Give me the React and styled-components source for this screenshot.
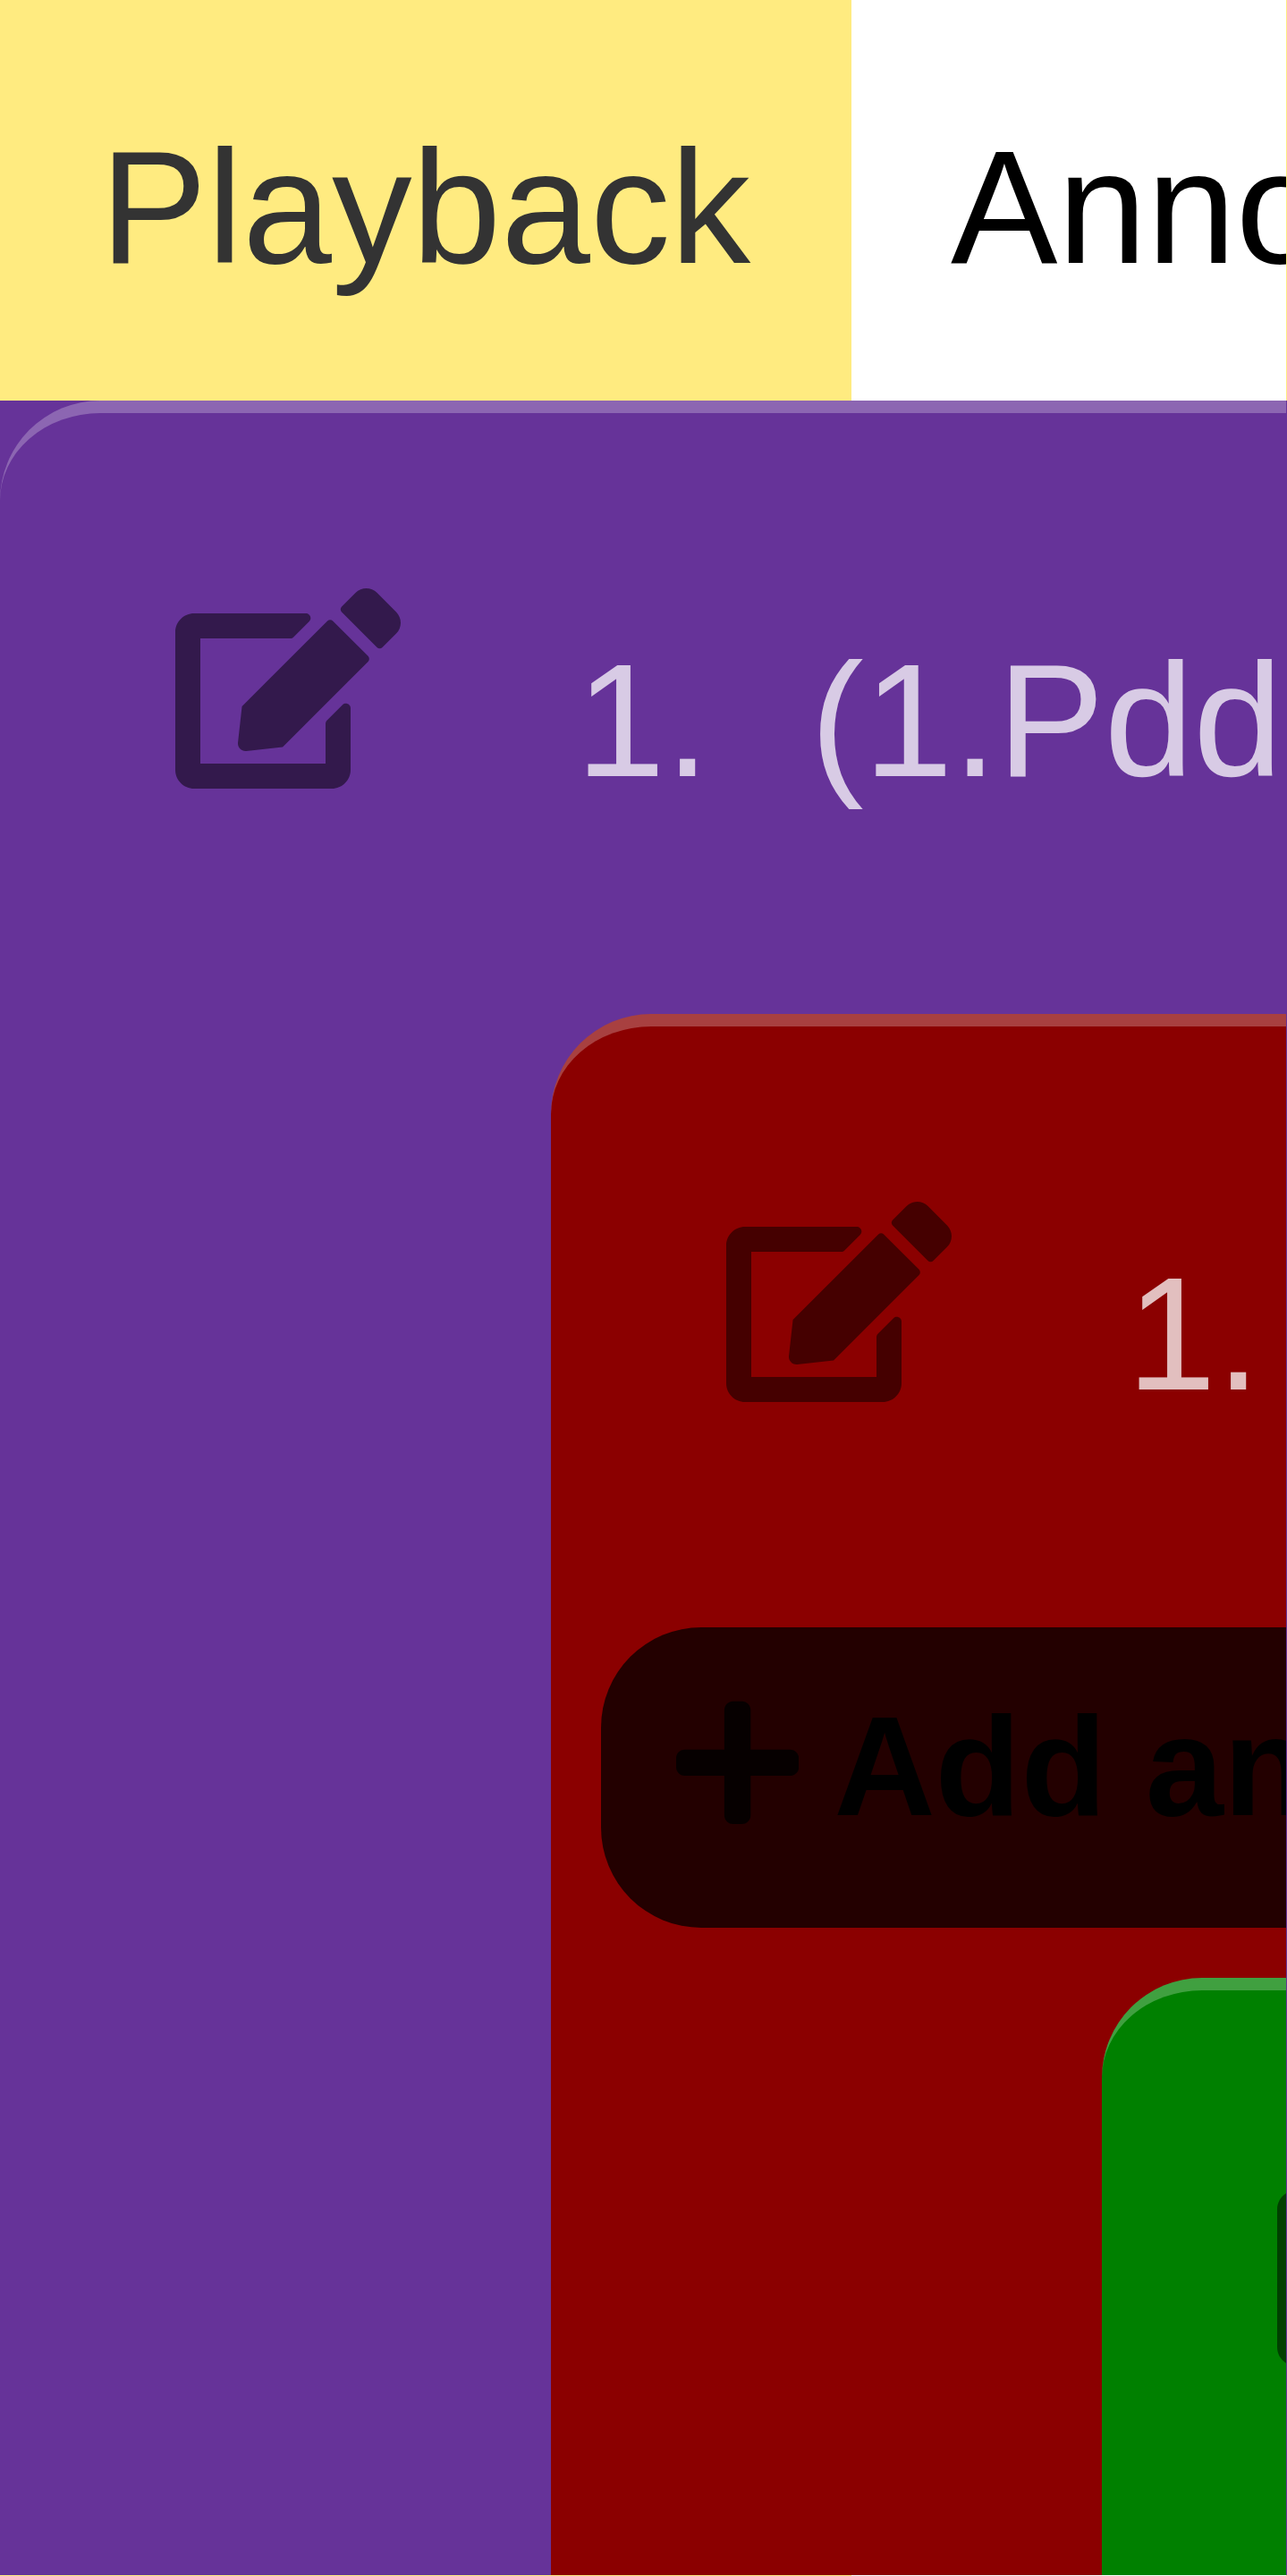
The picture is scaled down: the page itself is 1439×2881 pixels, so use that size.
import React from 'react';
import styled, { createGlobalStyle } from 'styled-components';
import { FaEdit, FaPlus } from 'react-icons/fa';

const GlobalStyle = createGlobalStyle`
  *, *::before, *::after { box-sizing: border-box; }
  html { overflow: hidden; }
  body {
    margin: 0;
    font-family: "Liberation Sans", Arial, sans-serif;
    font-size: 179.2px;
    background: #fff;
  }
`;

const Frame = styled.div`
  display: grid;
  grid-template-columns: 1438px 1px;
  grid-template-rows: 2880px 1px;
`;

const Screen = styled.div`
  display: flex;
  flex-direction: column;
  min-width: 0;
  overflow: hidden;
`;

const RightEdge = styled.div`
  background: linear-gradient(to bottom, #ffeb80 448px, #663399 448px);
`;

const BottomEdge = styled.div`
  background: linear-gradient(to right, #ffeb80 952px, #fff 952px);
`;

const Tabs = styled.nav`
  display: flex;
  flex: 0 0 448px;
`;

const Tab = styled.button`
  flex: none;
  min-width: 952px;
  height: 448px;
  margin: 0;
  padding: 16px 112px 0 ${(p) => (p.$active ? '112px' : '111px')};
  border: 0;
  font: inherit;
  line-height: 432px;
  text-align: left;
  white-space: nowrap;
  color: ${(p) => (p.$active ? '#333' : '#000')};
  background: ${(p) => (p.$active ? '#ffeb80' : '#fff')};
`;

const Tree = styled.main`
  flex: 1 0 auto;
  background: #663399;
`;

const Panel = styled.section`
  min-height: 2433px;
  margin-left: ${(p) => (p.$nested ? '616px' : '0')};
  border-top: 14px solid rgba(255, 255, 255, 0.25);
  border-top-left-radius: 112px;
  background: ${(p) => p.$color};
`;

const Header = styled.header`
  display: flex;
  align-items: flex-start;
  height: 672px;
  padding-left: 196px;
  white-space: nowrap;
`;

const EditIcon = styled(FaEdit)`
  flex: none;
  width: 252px;
  height: 224px;
  margin: 196px 196px 0 0;
  color: rgba(0, 0, 0, 0.5);
`;

const Title = styled.span`
  display: flex;
  gap: 112.6px;
  line-height: 672px;
  padding-top: 8px;
  color: rgba(255, 255, 255, 0.75);
`;

const AddButton = styled.button`
  display: flex;
  align-items: center;
  gap: 39.2px;
  width: 1680px;
  height: 336px;
  margin: 0 0 56px 56px;
  padding: 0 84px;
  border: 0;
  border-radius: 112px;
  font: bold 156.8px "Liberation Sans", Arial, sans-serif;
  white-space: nowrap;
  color: #000;
  background: rgba(0, 0, 0, 0.75);
`;

const PlusIcon = styled(FaPlus)`
  flex: none;
  width: 137.2px;
  height: 156.8px;
  margin-bottom: 33px;
  opacity: 0.8;
`;

const AddLabel = styled.span`
  padding-bottom: 24px;
`;

function Node({ color, nested, number, label, children }) {
  return (
    <Panel $color={color} $nested={nested}>
      <Header>
        <EditIcon />
        <Title>
          <span>{number}</span>
          {label && <span>{label}</span>}
        </Title>
      </Header>
      {children}
    </Panel>
  );
}

export default function App() {
  return (
    <Frame>
      <GlobalStyle />
      <Screen>
        <Tabs>
          <Tab $active>Playback</Tab>
          <Tab>Annotate</Tab>
        </Tabs>
        <Tree>
          <Node color="#663399" number="1." label="(1.Pdd4)">
            <Node color="#8b0000" nested number="1.">
              <AddButton>
                <PlusIcon />
                <AddLabel>Add annotation</AddLabel>
              </AddButton>
              <Node color="#008000" nested />
            </Node>
          </Node>
        </Tree>
      </Screen>
      <RightEdge />
      <BottomEdge />
      <RightEdge />
    </Frame>
  );
}
